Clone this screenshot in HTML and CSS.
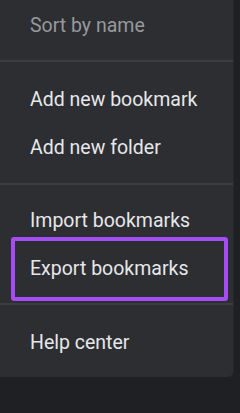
FILE: index.html
```html
<!DOCTYPE html>
<html lang="en">
  <head>
    <meta charset="UTF-8" />
    <meta name="viewport" content="width=device-width, initial-scale=1.0" />
    <title>Bookmarks menu</title>
    <link rel="stylesheet" href="styles.css">
  </head>
  <body>
    <div class="menu">
      <div class="section first">
        <div class="item muted">Sort by name</div>
      </div>
      <div class="divider"></div>
      <div class="section">
        <div class="item">Add new bookmark</div>
        <div class="item">Add new folder</div>
      </div>
      <div class="divider"></div>
      <div class="section tight">
        <div class="item">Import bookmarks</div>
        <div class="item highlighted">Export bookmarks</div>
      </div>
      <div class="divider"></div>
      <div class="section last">
        <div class="item">Help center</div>
      </div>
    </div>
  </body>
</html>
```

FILE: styles.css
```css
* {
  margin: 0;
  padding: 0;
  box-sizing: border-box;
}
body {
  font-family: Roboto, "Liberation Sans", sans-serif;
  background-color: #1f2023;
  width: 240px;
  height: 413px;
  overflow: hidden;
}
.menu {
  width: 233px;
  background-color: #2d2e31;
  border-bottom-right-radius: 6px;
  box-shadow: 1px 0 0 #26272a;
}
.section {
  padding: 14px 0 11px;
}
.section.first {
  padding: 2px 0 10px;
}
.section.tight {
  padding: 12px 0 10px;
}
.section.last {
  padding: 14px 0 10px;
}
.divider {
  height: 2px;
  background-color: #3c3d41;
}
.item {
  position: relative;
  height: 48px;
  line-height: 48px;
  padding-left: 30px;
  font-size: 19.5px;
  color: #e6e7ea;
  white-space: nowrap;
}
.item.muted {
  color: #97989c;
}
.item.highlighted::after {
  content: "";
  position: absolute;
  top: -8px;
  bottom: -8px;
  left: 11px;
  right: 5px;
  border: 4px solid #a54cf5;
  border-radius: 3px;
}
```
